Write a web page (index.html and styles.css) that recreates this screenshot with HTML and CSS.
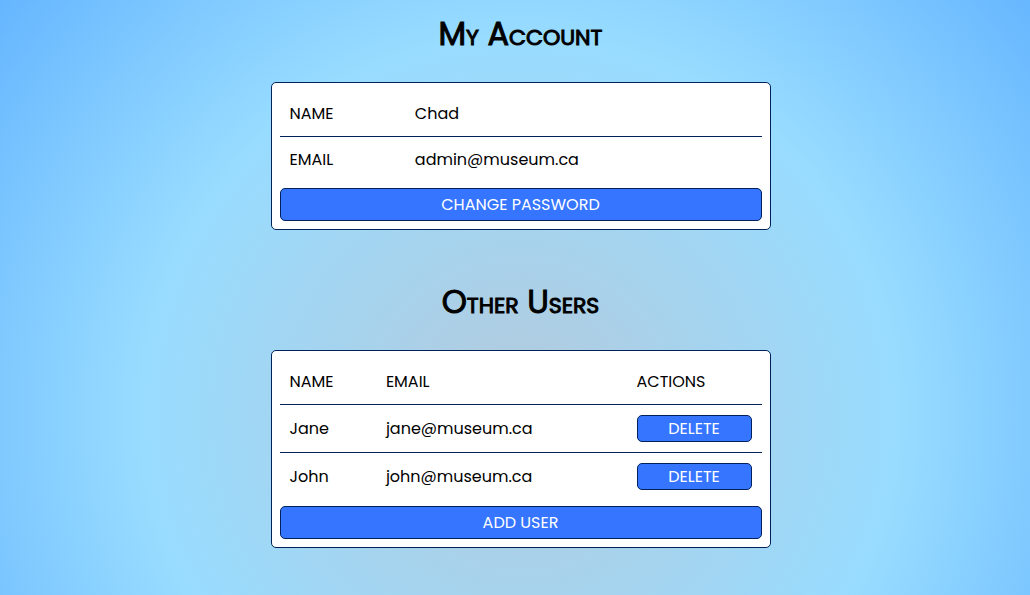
FILE: index.html
```html
<!DOCTYPE html>
<html lang="en">
<head>
<meta charset="utf-8">
<meta name="viewport" content="width=device-width, initial-scale=1">
<title>My Account</title>
<link rel="stylesheet" href="styles.css">
</head>
<body>
<main class="page">
  <section class="section">
    <h1 class="title">My Account</h1>
    <div class="card">
      <table class="table">
        <tr><th class="cell label" scope="row">NAME</th><td class="cell">Chad</td></tr>
        <tr><th class="cell label" scope="row">EMAIL</th><td class="cell">admin@museum.ca</td></tr>
      </table>
      <button class="button wide" type="button">CHANGE PASSWORD</button>
    </div>
  </section>
  <section class="section">
    <h1 class="title">Other Users</h1>
    <div class="card">
      <table class="table">
        <thead>
          <tr><th class="cell name" scope="col">NAME</th><th class="cell email" scope="col">EMAIL</th><th class="cell actions" scope="col">ACTIONS</th></tr>
        </thead>
        <tbody>
          <tr><td class="cell">Jane</td><td class="cell">jane@museum.ca</td><td class="cell"><button class="button" type="button">DELETE</button></td></tr>
          <tr><td class="cell">John</td><td class="cell">john@museum.ca</td><td class="cell"><button class="button" type="button">DELETE</button></td></tr>
        </tbody>
      </table>
      <button class="button wide" type="button">ADD USER</button>
    </div>
  </section>
</main>
</body>
</html>
```
FILE: styles.css
```css
* {
  box-sizing: border-box;
}

body {
  margin: 0;
  min-height: 100vh;
  padding-left: 11px;
  font-family: Poppins, Inter, sans-serif;
  font-size: 16px;
  line-height: 25px;
  color: #000;
  background: radial-gradient(circle 664px at calc(50% + 5px) 415px, #b4cadc 0%, #98dcff 57%, #66b6ff 100%) no-repeat;
}

.page {
  display: flex;
  flex-direction: column;
  align-items: center;
  gap: 48px;
  padding: 10px 0 46px;
}

.section {
  width: 100%;
  max-width: 500px;
}

.title {
  margin: 0 0 24px;
  font-size: 32px;
  line-height: 48px;
  font-weight: 400;
  font-variant: small-caps;
  text-align: center;
  -webkit-text-stroke: 1px #000;
}

.card {
  padding: 8px;
  border: 1px solid #002259;
  border-radius: 5px;
  background: #fff;
}

.table {
  width: 100%;
  margin-bottom: 6px;
  border-collapse: separate;
  border-spacing: 0;
  table-layout: fixed;
}

.cell {
  padding: 10px;
  font-weight: 400;
  text-align: left;
}

.table tr:not(:last-child) > .cell,
.table thead .cell {
  border-bottom: 1px solid #002259;
}

.label {
  width: 26%;
}

.name {
  width: 20%;
}

.email {
  width: 52%;
}

.button {
  display: block;
  width: 100%;
  padding: 0;
  border: 1px solid #002259;
  border-radius: 5px;
  background: #3575ff;
  color: #fff;
  font: inherit;
  cursor: pointer;
}

.wide {
  padding: 3px 0;
}
```
